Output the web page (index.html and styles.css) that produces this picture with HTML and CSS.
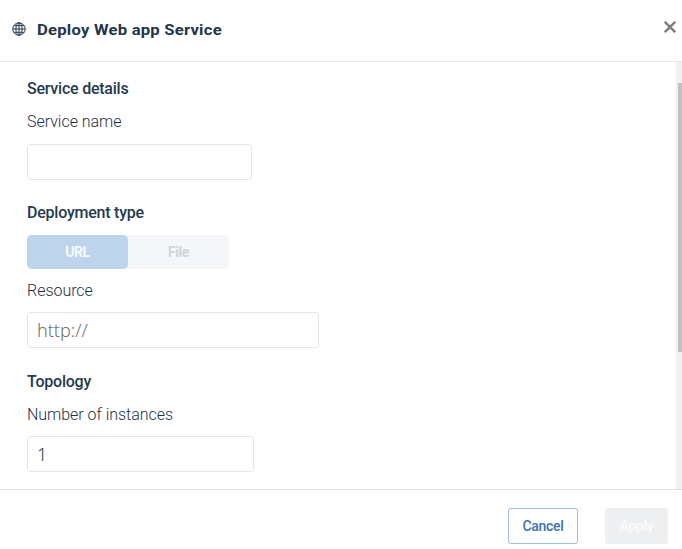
FILE: index.html
```html
<!DOCTYPE html>
<html lang="en">
<head>
<meta charset="utf-8">
<title>Deploy Web app Service</title>
<link rel="stylesheet" href="styles.css">
</head>
<body>
<div class="dialog">
  <header class="header">
    <svg class="globe" viewBox="0 0 14 14" fill="none" stroke="currentColor">
      <circle cx="7" cy="7" r="6.2"/>
      <ellipse cx="7" cy="7" rx="3.1" ry="6.2"/>
      <path d="M7 .8v12.4M.8 7h12.4M1.8 3.7h10.4M1.8 10.3h10.4"/>
    </svg>
    <h1 class="title"><span class="title-text">Deploy Web app Service</span></h1>
    <button class="close" aria-label="Close">
      <svg viewBox="0 0 12 12" fill="none" stroke="currentColor"><path d="M.8.8l10.4 10.4M11.2.8L.8 11.2"/></svg>
    </button>
  </header>
  <main class="body">
    <form class="form">
      <h2 class="section s1"><span>Service details</span></h2>
      <label class="label l1" for="name">Service name</label>
      <input class="field name" id="name" type="text">
      <h2 class="section s2"><span>Deployment type</span></h2>
      <div class="toggle">
        <button type="button" class="option selected">URL</button>
        <button type="button" class="option">File</button>
      </div>
      <label class="label l2" for="resource">Resource</label>
      <input class="field resource" id="resource" type="text" placeholder="http://">
      <h2 class="section s3"><span>Topology</span></h2>
      <label class="label l3" for="count">Number of instances</label>
      <input class="field count" id="count" type="text" value="1">
    </form>
    <div class="track"><div class="thumb"></div></div>
  </main>
  <footer class="footer">
    <button class="btn cancel">Cancel</button>
    <button class="btn apply" disabled>Apply</button>
  </footer>
</div>
</body>
</html>
```
FILE: styles.css
```css
* { box-sizing: border-box; }
body { margin: 0; background: #fff; color: #253a4e; font-family: Roboto, sans-serif; }
h1, h2 { margin: 0; }
button { margin: 0; padding: 0; border: 0; font-family: inherit; }
.dialog { display: flex; flex-direction: column; width: 682px; height: 549px; overflow: hidden; }

.header { display: flex; align-items: center; height: 62px; padding: 0 6px 4px 12px; border-bottom: 1px solid #e6e7e8; }
.globe { width: 14px; height: 14px; color: #253a4e; }
.title { flex: 1; margin: 3px 0 0 11px; font-size: 15px; line-height: 20px; font-weight: 700; letter-spacing: .2px; color: #22364a; }
.title-text { display: inline-block; transform: scaleX(1.11); transform-origin: 0 50%; }
.close { width: 12px; height: 12px; margin-top: -4px; background: none; color: #7c7c7c; }
.close svg { display: block; width: 12px; height: 12px; stroke-width: 2.3; }

.body { display: flex; height: 427px; }
.form { display: flex; flex: 1; flex-direction: column; align-items: flex-start; padding: 17px 0 0 27px; }
.section { font-size: 16px; line-height: 20px; font-weight: 500; letter-spacing: -.23px; }
.label { font-size: 16px; line-height: 20px; font-weight: 300; letter-spacing: -.03px; color: #1c3247; }
.l1, .l3 { margin-top: 13px; }
.l2 { margin-top: 12px; }
.field { height: 36px; padding: 0 9px; border: 1px solid #e5e6e8; border-radius: 3px; background: #fff; color: #253a4e; font-family: "Noto Sans", sans-serif; font-size: 18px; font-weight: 300; outline: 0; }
.field::placeholder { color: #707070; opacity: 1; }
.name { width: 225px; margin-top: 12px; }
.resource { width: 292px; margin-top: 11px; }
.count { width: 227px; margin-top: 11px; font-weight: 350; }
.s2 { margin-top: 23px; }
.s3 { margin-top: 24px; }
.toggle { display: flex; width: 202px; height: 34px; margin-top: 12px; border-radius: 4px; background: #f5f6f9; }
.option { width: 101px; border-radius: 5px; background: none; color: #ced5db; font-size: 14px; font-weight: 700; letter-spacing: -.4px; }
.selected { background: #bed3ec; color: #f8fbff; }

.track { width: 6px; padding: 21px 0 0 2px; background: #f0f0f0; }
.thumb { height: 269px; background: #c1c1c1; }

.footer { display: flex; flex: 1; align-items: flex-start; justify-content: flex-end; gap: 27px; padding: 18px 14px 0; border-top: 1px solid #dfe0e1; }
.btn { height: 36px; border-radius: 3px; font-size: 14px; font-weight: 500; letter-spacing: -.3px; }
.cancel { width: 70px; border: 1px solid #9cbce6; background: #fff; color: #3c70b7; }
.apply { width: 63px; background: #edeff1; color: #f9fafb; font-weight: 700; }
```
